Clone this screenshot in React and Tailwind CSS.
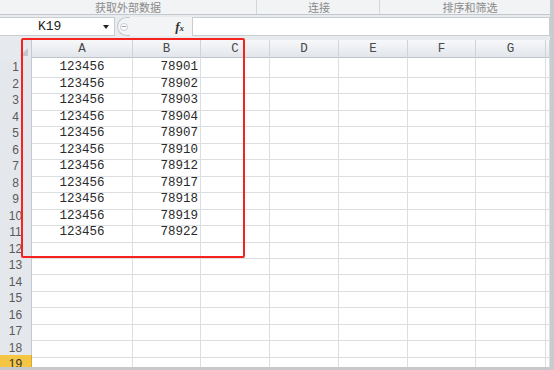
import React from 'react';

const rowsData = [
  ['123456', '78901'],
  ['123456', '78902'],
  ['123456', '78903'],
  ['123456', '78904'],
  ['123456', '78907'],
  ['123456', '78910'],
  ['123456', '78912'],
  ['123456', '78917'],
  ['123456', '78918'],
  ['123456', '78919'],
  ['123456', '78922'],
];

const cols = ['A', 'B', 'C', 'D', 'E', 'F', 'G', ''];

function RibbonLabels() {
  return (
    <div className="flex h-[15px] bg-[#f2f3f5] border-b border-[#c4c8ce] text-[11px] leading-[14px] text-[#8a8a8a]" style={{ fontFamily: '"Noto Sans CJK SC", sans-serif' }}>
      <div className="w-[257px] border-r border-[#d3d6da] text-center">获取外部数据</div>
      <div className="w-[123px] border-r border-[#d3d6da] text-center pl-[2px]">连接</div>
      <div className="flex-1 text-center pl-[10px]">排序和筛选</div>
    </div>
  );
}

function FormulaBar() {
  return (
    <div className="flex items-center h-[25px] bg-[#e9ecef] pt-[1px] pb-[3px]">
      <div className="relative w-[115px] h-[19px] bg-white border border-l-0 border-[#c9cdd2] flex items-center">
        <span className="ml-[38px] text-[13px] text-[#222]" style={{ fontFamily: '"Liberation Mono", monospace' }}>K19</span>
        <span className="absolute right-[5px] top-[7px] w-0 h-0 border-l-[3.5px] border-r-[3.5px] border-t-[4px] border-l-transparent border-r-transparent border-t-[#222]" />
      </div>
      <div className="w-[13px] h-[19px] ml-[2px] rounded-l-full border border-r-0 border-[#c4c8cd] bg-[#f3f4f6] flex items-center justify-center">
        <div className="w-[8px] h-[8px] rounded-full border border-[#c9ccd0] bg-white flex items-center justify-center">
          <div className="w-[4px] h-px bg-[#9aa0a6]" />
        </div>
      </div>
      <div className="w-[62px] h-[19px] bg-[#f3f4f6] flex items-center justify-end pr-[8px]">
        <span className="text-[13px] italic font-bold text-[#333]" style={{ fontFamily: '"Liberation Serif", serif' }}>f<span className="text-[9px]">x</span></span>
      </div>
      <div className="flex-1 h-[19px] bg-white border border-[#c9cdd2]" />
    </div>
  );
}

function Sheet() {
  const grid = 'grid grid-cols-[32px_101px_68px_69px_69px_69px_68px_70px_1fr]';
  const mono = { fontFamily: '"Liberation Mono", monospace' };
  return (
    <div className="flex-1 overflow-hidden bg-white border-b-[3px] border-[#c6c8cb]">
      <div className={`${grid} h-[18px] bg-gradient-to-b from-[#f7f8fa] to-[#e2e6eb] border-b border-[#bfc5cc]`}>
        <div className="relative border-r border-[#c3c9d0] bg-[#e6e9ed]">
          <span className="absolute right-[3px] bottom-[3px] w-0 h-0" style={{ borderBottom: '8px solid #c3c8cf', borderLeft: '8px solid transparent' }} />
        </div>
        {cols.map((c, i) => (
          <div key={i} className="border-r border-[#cfd4da] flex items-center justify-center text-[12.5px] text-[#4a4a4a]" style={mono}>{c}</div>
        ))}
      </div>
      {Array.from({ length: 19 }).map((_, r) => {
        const data = rowsData[r];
        const active = r === 18;
        return (
          <div key={r} className={`${grid} h-[16.5px]`}>
            <div className={`flex items-center justify-center text-[12px] border-r border-b ${active ? 'bg-[#f5c544] border-[#e3a22a] text-[#333]' : 'bg-[#e4e8ed] border-[#c3c9d0] text-[#5a5a5a]'}`} style={{ fontFamily: '"Liberation Sans", sans-serif' }}>{r + 1}</div>
            <div className="border-r border-b border-[#dcdfe2] flex items-center justify-center text-[12.5px] text-[#2a2a2a]" style={mono}>{data ? data[0] : ''}</div>
            <div className="border-r border-b border-[#dcdfe2] flex items-center justify-end pr-[2px] text-[12.5px] text-[#2a2a2a]" style={mono}>{data ? data[1] : ''}</div>
            {[0, 1, 2, 3, 4, 5].map(k => (
              <div key={k} className="border-r border-b border-[#dcdfe2]" />
            ))}
          </div>
        );
      })}
    </div>
  );
}

export default function App() {
  return (
    <div className="flex w-[554px] h-[370px] overflow-hidden bg-[#e9ecef]">
      <div className="relative flex-1 flex flex-col min-w-0">
        <RibbonLabels />
        <FormulaBar />
        <Sheet />
        <div className="absolute left-[21px] top-[38px] w-[224px] h-[220px] border-2 border-[#f5221f] rounded-[2px]" />
      </div>
      <div className="w-[4px] bg-[#c9cbce]" />
    </div>
  );
}
